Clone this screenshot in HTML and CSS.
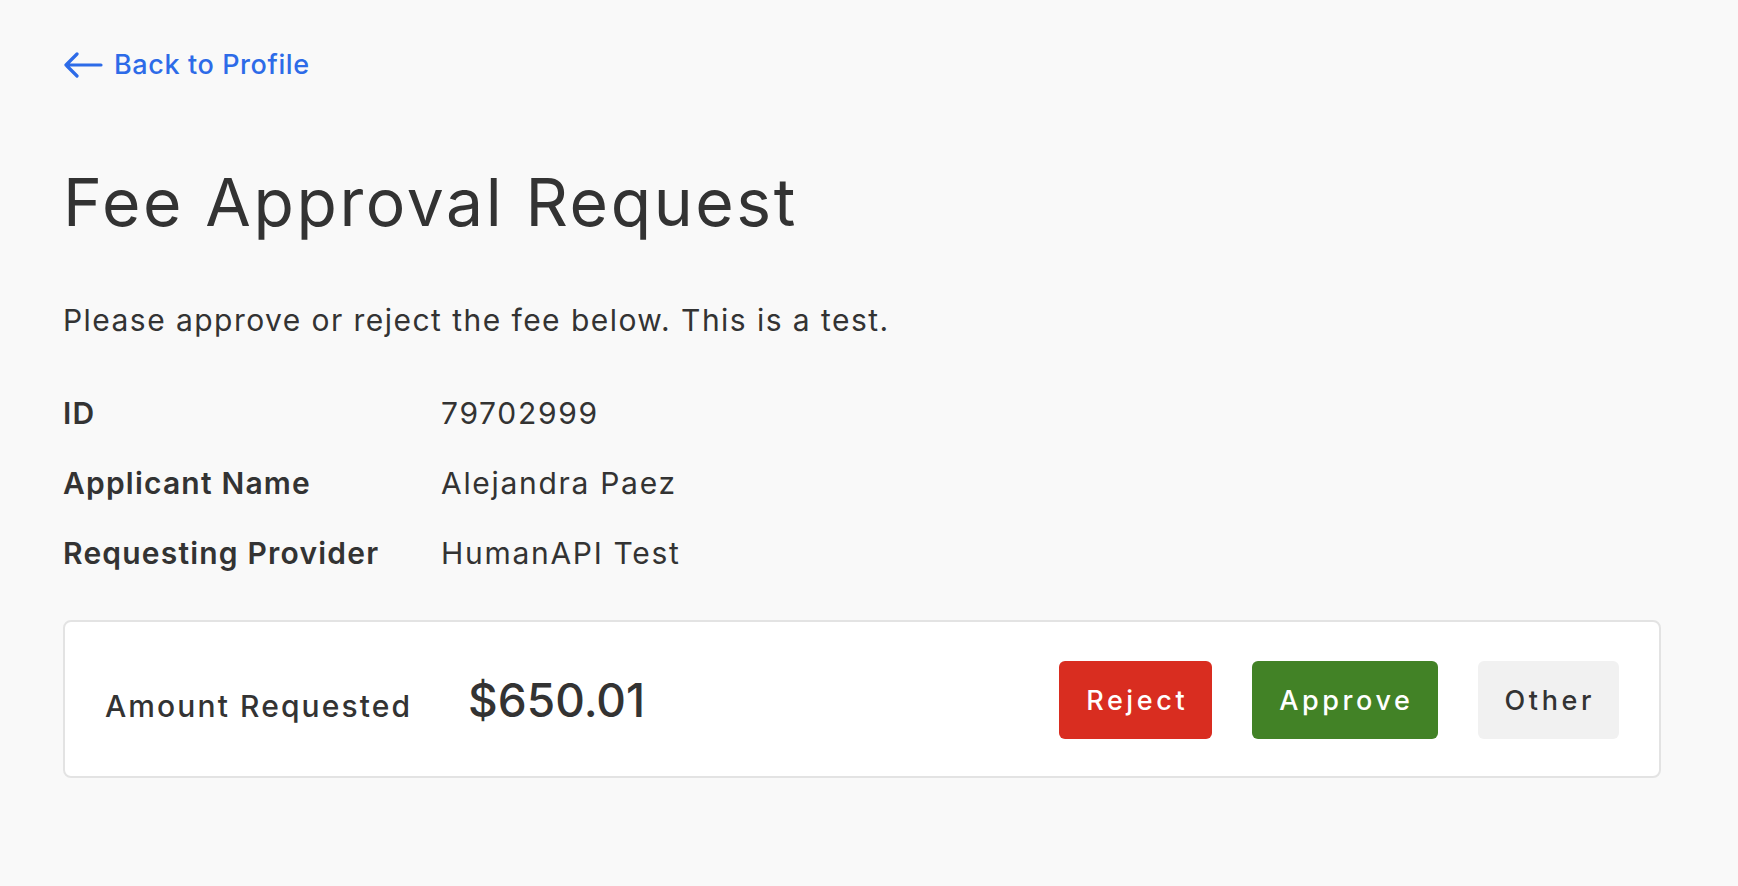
FILE: index.html
```html
<!DOCTYPE html>
<html lang="en">
<head>
<meta charset="utf-8">
<title>Fee Approval Request</title>
<link rel="stylesheet" href="styles.css">
</head>
<body>
<main class="page">
  <a class="back-link" href="#">
    <svg class="back-icon" width="40" height="26" viewBox="0 0 40 26" aria-hidden="true">
      <path d="M38 13H3M14 2L3 13l11 11" fill="none" stroke="currentColor" stroke-width="3.2" stroke-linecap="round" stroke-linejoin="round"/>
    </svg>
    <span>Back to Profile</span>
  </a>

  <h1 class="title">Fee Approval Request</h1>

  <p class="intro">Please approve or reject the fee below. This is a test.</p>

  <dl class="details">
    <dt class="label">ID</dt>
    <dd class="value">79702999</dd>
    <dt class="label">Applicant Name</dt>
    <dd class="value">Alejandra Paez</dd>
    <dt class="label">Requesting Provider</dt>
    <dd class="value">HumanAPI Test</dd>
  </dl>

  <section class="amount-card">
    <div class="amount">
      <span class="amount-label">Amount Requested</span>
      <span class="amount-value">$650.01</span>
    </div>
    <div class="actions">
      <button class="btn btn-reject" type="button">Reject</button>
      <button class="btn btn-approve" type="button">Approve</button>
      <button class="btn btn-other" type="button">Other</button>
    </div>
  </section>
</main>
</body>
</html>
```

FILE: styles.css
```css
html, body {
  margin: 0;
  padding: 0;
  background: #f9f9f9;
}

body {
  font-family: Inter, "Open Sans", "Liberation Sans", sans-serif;
  color: #333333;
}

.page {
  padding: 41px 77px 0 63px;
}

.back-link {
  display: inline-flex;
  align-items: center;
  gap: 11px;
  height: 48px;
  color: #2d6be8;
  text-decoration: none;
  font-size: 27px;
  font-weight: 500;
  line-height: 48px;
  letter-spacing: 0.6px;
}

.back-icon {
  display: block;
  flex: none;
}

.title {
  margin: 73px 0 0;
  font-size: 66px;
  font-weight: 400;
  line-height: 80px;
  letter-spacing: 2.6px;
  color: #333333;
}

.intro {
  margin: 58px 0 0;
  font-size: 30px;
  line-height: 40px;
  font-weight: 400;
  letter-spacing: 1.45px;
}

.details {
  display: grid;
  grid-template-columns: 378px 1fr;
  margin: 38px 0 0;
  font-size: 30px;
  line-height: 70px;
}

.label {
  margin: 0;
  font-weight: 600;
  letter-spacing: 1.2px;
}

.value {
  margin: 0;
  font-weight: 400;
  letter-spacing: 1.7px;
}

.amount-card {
  display: flex;
  align-items: center;
  justify-content: space-between;
  margin-top: 32px;
  padding: 39px 40px 37px 40px;
  background: #ffffff;
  border: 2px solid #e3e3e3;
  border-radius: 8px;
}

.amount {
  display: flex;
  align-items: baseline;
  gap: 56px;
}

.amount-label {
  font-size: 30px;
  font-weight: 500;
  letter-spacing: 2.1px;
}

.amount-value {
  font-size: 46px;
  font-weight: 500;
  letter-spacing: 0;
}

.actions {
  display: flex;
  gap: 40px;
}

.btn {
  height: 78px;
  padding: 0 24px 0 27px;
  border: none;
  border-radius: 6px;
  font-family: inherit;
  font-size: 27px;
  font-weight: 500;
  letter-spacing: 3.6px;
  cursor: pointer;
}

.btn-reject {
  background: #d92d20;
  color: #ffffff;
}

.btn-approve {
  background: #428226;
  color: #ffffff;
}

.btn-other {
  background: #f1f1f1;
  color: #333333;
}
```
